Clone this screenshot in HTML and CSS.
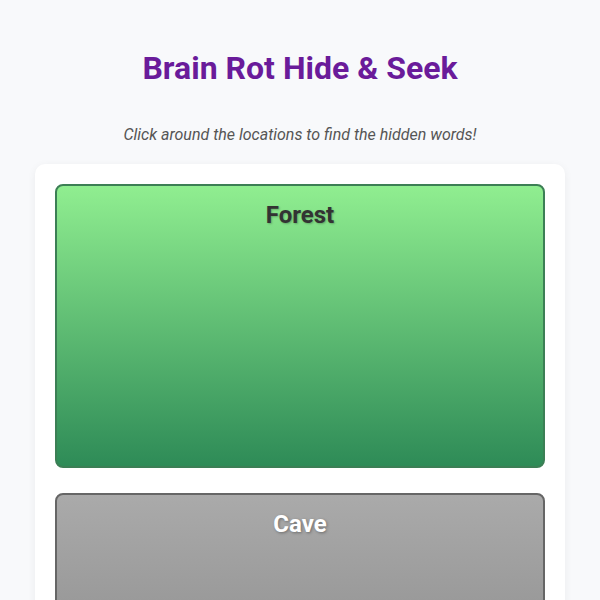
FILE: index.html
```html
<!DOCTYPE html>
<html>
<head>
<meta charset="utf-8">
<link rel="stylesheet" href="styles.css">
</head>
<body>
<h1 class="title">Brain Rot Hide &amp; Seek</h1>
<p class="subtitle">Click around the locations to find the hidden words!</p>
<div class="game">
  <div class="location forest"><h2 class="loc-name">Forest</h2></div>
  <div class="location cave"><h2 class="loc-name">Cave</h2></div>
</div>
</body>
</html>
```
FILE: styles.css
```css
html, body { margin: 0; }
body {
  background: #f8f9fb;
  font-family: Roboto, "Noto Sans", sans-serif;
  padding: 30px 35px;
}
.title {
  margin: 18px 0 0;
  text-align: center;
  color: #6a1b9a;
  font-size: 32px;
  font-weight: 700;
  line-height: 40px;
}
.subtitle {
  margin: 36px 0 0;
  text-align: center;
  font-style: italic;
  color: #555;
  font-size: 16px;
  line-height: 22px;
}
.game {
  margin-top: 18px;
  background: #fff;
  border-radius: 10px;
  box-shadow: 0 2px 8px rgba(0,0,0,0.06);
  padding: 20px;
  display: flex;
  flex-direction: column;
  gap: 25px;
}
.location {
  border: 2px solid;
  border-radius: 8px;
  text-align: center;
  padding-top: 14px;
  box-sizing: border-box;
  height: 284px;
}
.forest {
  background: linear-gradient(#90ee90, #2e8b57);
  border-color: #3c7f55;
}
.cave {
  background: linear-gradient(#aaaaaa, #808080);
  border-color: #666;
}
.loc-name {
  margin: 0;
  font-size: 24px;
  font-weight: 700;
  line-height: 30px;
}
.forest .loc-name { color: #333; text-shadow: 1px 1px 2px rgba(0,0,0,0.25); }
.cave .loc-name { color: #fff; text-shadow: 1px 1px 3px rgba(0,0,0,0.35); }
```
